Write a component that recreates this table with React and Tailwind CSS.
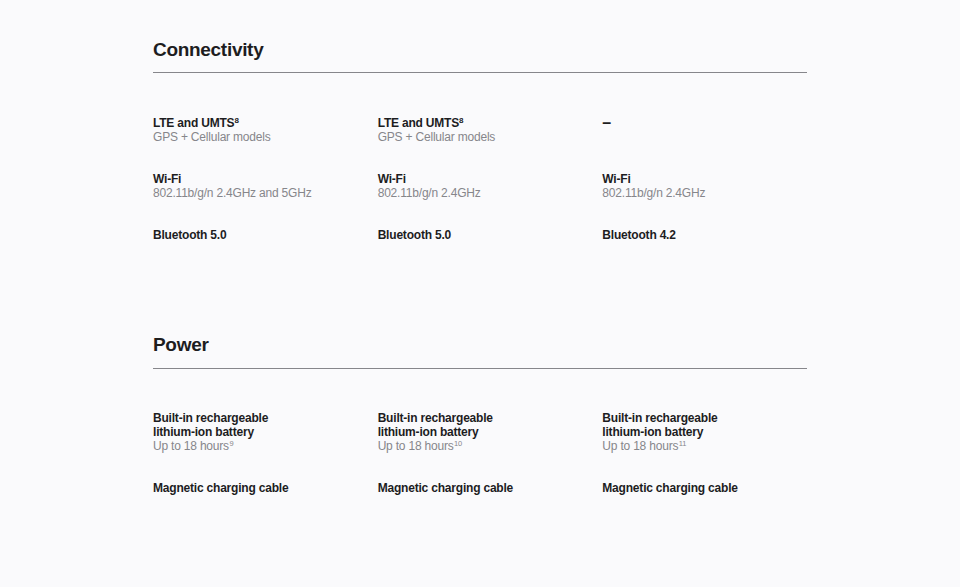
import React from 'react';

const connectivity = [
    [
        { title: 'LTE and UMTS', sup: '8', sub: 'GPS + Cellular models' },
        { title: 'LTE and UMTS', sup: '8', sub: 'GPS + Cellular models' },
        { dash: true },
    ],
    [
        { title: 'Wi-Fi', sub: '802.11b/g/n 2.4GHz and 5GHz' },
        { title: 'Wi-Fi', sub: '802.11b/g/n 2.4GHz' },
        { title: 'Wi-Fi', sub: '802.11b/g/n 2.4GHz' },
    ],
    [
        { title: 'Bluetooth 5.0' },
        { title: 'Bluetooth 5.0' },
        { title: 'Bluetooth 4.2' },
    ],
];

const power = [
    [
        { title: 'Built-in rechargeable lithium-ion battery', sub: 'Up to 18 hours', subSup: '9' },
        { title: 'Built-in rechargeable lithium-ion battery', sub: 'Up to 18 hours', subSup: '10' },
        { title: 'Built-in rechargeable lithium-ion battery', sub: 'Up to 18 hours', subSup: '11' },
    ],
    [
        { title: 'Magnetic charging cable' },
        { title: 'Magnetic charging cable' },
        { title: 'Magnetic charging cable' },
    ],
];

const Cell = ({ item }) => {
    if (item.dash) {
        return <div className="text-[16px] leading-[14px] font-bold text-[#1d1d1f]">–</div>;
    }
    return (
        <div className="text-[12px] leading-[14px] tracking-[-0.2px]">
            <p className="font-bold text-[#1d1d1f] max-w-[150px]">
                {item.title}
                {item.sup && <sup className="text-[8px] -top-[4px]">{item.sup}</sup>}
            </p>
            {item.sub && (
                <p className="text-[#86868b]">
                    {item.sub}
                    {item.subSup && <sup className="text-[7.5px] -top-[4px] ml-[0.5px]">{item.subSup}</sup>}
                </p>
            )}
        </div>
    );
};

const Section = ({ title, rows, className, ruleGap = 'mt-[10px]', gridGap = 'mt-[43px]' }) => (
    <section className={className}>
        <h2 className="text-[19px] leading-[24px] font-bold text-[#1d1d1f] tracking-[-0.3px]">{title}</h2>
        <div className={`h-px bg-[#86868b] ${ruleGap}`} />
        <div className={`grid grid-cols-3 gap-x-[20px] gap-y-[28px] ${gridGap}`}>
            {rows.flat().map((item, i) => (
                <Cell key={i} item={item} />
            ))}
        </div>
    </section>
);

const App = () => {
    return (
        <div className="w-[960px] h-[587px] bg-[#fafafc] overflow-hidden" style={{ fontFamily: '"Liberation Sans", Arial, sans-serif' }}>
            <div className="w-[654px] ml-[153px] pt-[38px]">
                <Section title="Connectivity" rows={connectivity} />
                <Section title="Power" rows={power} className="mt-[91px]" ruleGap="mt-[11px]" gridGap="mt-[42px]" />
            </div>
        </div>
    );
};

export default App;
